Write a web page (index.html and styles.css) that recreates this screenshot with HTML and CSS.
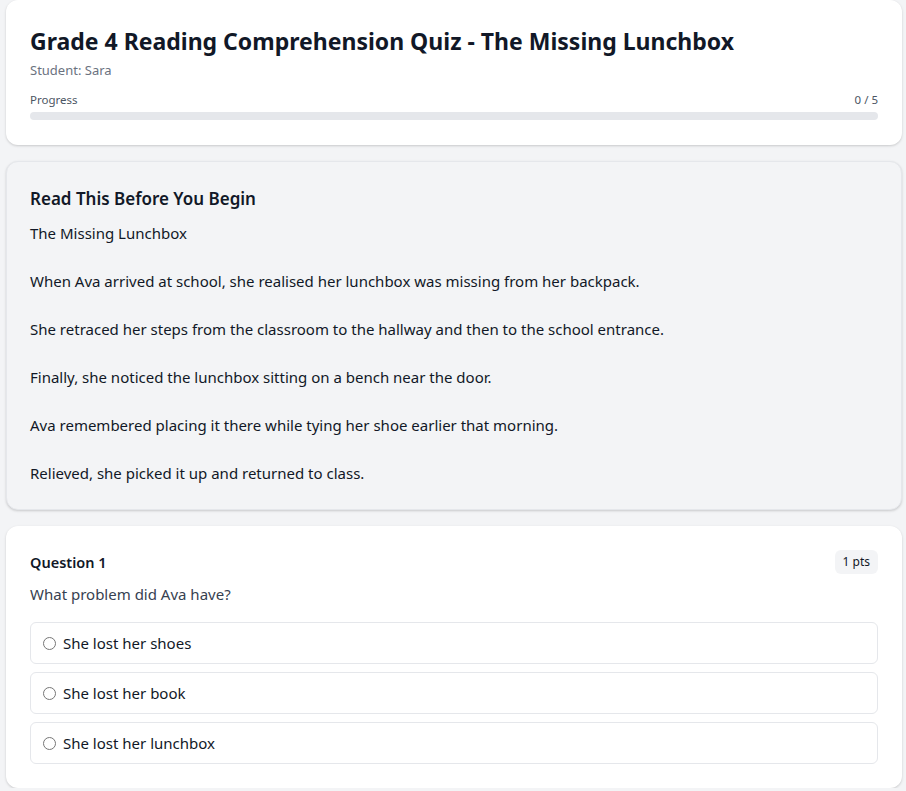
FILE: index.html
```html
<!DOCTYPE html>
<html lang="en">
<head>
<meta charset="utf-8">
<title>Grade 4 Reading Comprehension Quiz</title>
<link rel="stylesheet" href="styles.css">
</head>
<body>
<main class="page">
  <section class="card header-card">
    <h1 class="quiz-title">Grade 4 Reading Comprehension Quiz - The Missing Lunchbox</h1>
    <div class="student">Student: Sara</div>
    <div class="progress-row">
      <span>Progress</span>
      <span>0 / 5</span>
    </div>
    <div class="progress-bar"><div class="progress-fill"></div></div>
  </section>

  <section class="card passage-card">
    <h2 class="passage-title">Read This Before You Begin</h2>
    <div class="passage-text">The Missing Lunchbox

When Ava arrived at school, she realised her lunchbox was missing from her backpack.

She retraced her steps from the classroom to the hallway and then to the school entrance.

Finally, she noticed the lunchbox sitting on a bench near the door.

Ava remembered placing it there while tying her shoe earlier that morning.

Relieved, she picked it up and returned to class.</div>
  </section>

  <section class="card question-card">
    <div class="question-head">
      <h3 class="question-label">Question 1</h3>
      <span class="points">1 pts</span>
    </div>
    <p class="question-text">What problem did Ava have?</p>
    <div class="options">
      <label class="option"><input type="radio" name="q1"><span>She lost her shoes</span></label>
      <label class="option"><input type="radio" name="q1"><span>She lost her book</span></label>
      <label class="option"><input type="radio" name="q1"><span>She lost her lunchbox</span></label>
    </div>
  </section>
</main>
</body>
</html>
```

FILE: styles.css
```css
* { box-sizing: border-box; }

html, body {
  margin: 0;
  padding: 0;
  background: #f3f4f6;
  font-family: "Noto Sans", "Open Sans", sans-serif;
  color: #111827;
}

.page {
  padding: 0 4px 0 6px;
  display: flex;
  flex-direction: column;
  gap: 16px;
}

.card {
  background: #ffffff;
  border-radius: 12px;
  padding: 24px;
  box-shadow: 0 1px 3px rgba(0, 0, 0, 0.12), 0 1px 2px rgba(0, 0, 0, 0.06);
}

.header-card {
  padding-bottom: 25px;
}

.quiz-title {
  margin: 0;
  font-size: 23px;
  line-height: 34px;
  font-weight: 700;
  color: #111827;
}

.student {
  margin-top: 2px;
  font-size: 13px;
  line-height: 20px;
  color: #6b7280;
}

.progress-row {
  margin-top: 12px;
  display: flex;
  justify-content: space-between;
  font-size: 11.5px;
  line-height: 16px;
  color: #4b5563;
}

.progress-bar {
  margin-top: 4px;
  height: 8px;
  border-radius: 4px;
  background: #e5e7eb;
  overflow: hidden;
}

.progress-fill {
  width: 0;
  height: 100%;
  background: #3b82f6;
}

.passage-card {
  background: #f3f4f6;
  border: 1px solid #e5e7eb;
  padding: 23px 23px 24px;
}

.passage-title {
  margin: 0;
  font-size: 17px;
  line-height: 28px;
  font-weight: 600;
  color: #111827;
}

.passage-text {
  margin-top: 8px;
  white-space: pre-wrap;
  font-size: 15px;
  line-height: 24px;
  color: #111827;
}

.question-head {
  display: flex;
  justify-content: space-between;
  align-items: center;
}

.question-label {
  margin: 0;
  font-size: 14.5px;
  line-height: 24px;
  font-weight: 600;
  color: #111827;
}

.points {
  background: #f3f4f6;
  border-radius: 6px;
  padding: 0 8px;
  font-size: 12px;
  line-height: 24px;
  color: #111827;
}

.question-text {
  margin: 8px 0 0;
  font-size: 15px;
  line-height: 24px;
  color: #374151;
}

.options {
  margin-top: 16px;
  display: flex;
  flex-direction: column;
  gap: 8px;
}

.option {
  display: flex;
  align-items: center;
  gap: 7px;
  height: 42px;
  padding: 0 12px;
  border: 1px solid #e5e7eb;
  border-radius: 6px;
  font-size: 15px;
  color: #111827;
  cursor: pointer;
}

.option input {
  margin: 0;
  width: 13px;
  height: 13px;
}
```
